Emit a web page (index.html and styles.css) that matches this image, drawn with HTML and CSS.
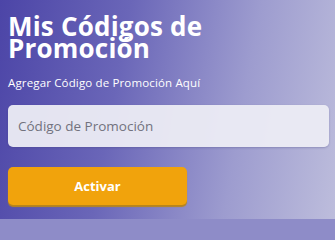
FILE: index.html
```html
<!DOCTYPE html>
<html lang="es">
<head>
<meta charset="utf-8">
<link rel="stylesheet" href="styles.css">
</head>
<body>
<main class="promo">
  <h1 class="promo-title">Mis Códigos de<br>Promoción</h1>
  <p class="promo-sub">Agregar Código de Promoción Aquí</p>
  <input class="promo-input" type="text" placeholder="Código de Promoción">
  <button class="promo-btn" type="button">Activar</button>
</main>
</body>
</html>
```
FILE: styles.css
```css
html {
  background: #8e8cc8;
}
html, body {
  margin: 0;
  padding: 0;
  width: 335px;
  height: 219px;
  overflow: hidden;
}
body {
  background: linear-gradient(100deg, #4c45a7 0%, #6a66b8 35%, #9d9ccf 70%, #bdbddc 100%);
  font-family: "Open Sans", "Noto Sans", sans-serif;
}
.promo {
  display: flex;
  flex-direction: column;
  align-items: flex-start;
  padding: 15px 6px 0 8px;
}
.promo-title {
  margin: 0;
  color: #ffffff;
  font-size: 26px;
  font-weight: 700;
  line-height: 22px;
  letter-spacing: 0.2px;
}
.promo-sub {
  margin: 16px 0 0;
  color: #ffffff;
  font-size: 11.5px;
  line-height: 15px;
  letter-spacing: 0.15px;
}
.promo-input {
  box-sizing: border-box;
  margin-top: 15px;
  width: 321px;
  height: 42px;
  border: none;
  border-radius: 5px;
  background: rgba(236, 236, 244, 0.95);
  padding: 0 10px;
  font-family: "Open Sans", "Noto Sans", sans-serif;
  font-size: 13.5px;
  color: #555;
  box-shadow: 0 1px 2px rgba(60, 60, 120, 0.3);
  outline: none;
}
.promo-input::placeholder {
  color: #72727e;
}
.promo-btn {
  margin-top: 20px;
  width: 179px;
  height: 38px;
  border: none;
  border-radius: 5px;
  background: #f1a30c;
  color: #ffffff;
  font-family: "Open Sans", "Noto Sans", sans-serif;
  font-weight: 700;
  font-size: 13px;
  box-shadow: 0 2px 1px #b9851b;
}
```
